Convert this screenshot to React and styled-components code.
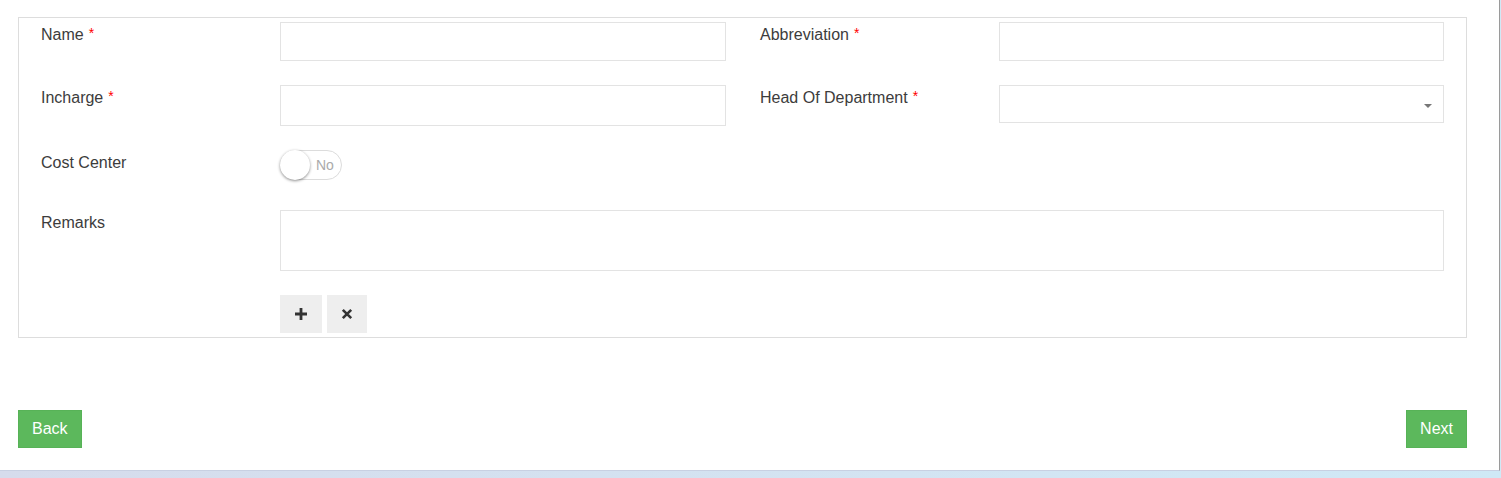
import React from 'react'
import styled, { createGlobalStyle } from 'styled-components'

const GlobalStyle = createGlobalStyle`
  html, body {
    margin: 0;
    padding: 0;
    height: 478px;
    overflow: hidden;
    background: linear-gradient(to right, #d6dcec 0%, #d3e4f2 60%, #cfe9f6 100%);
    font-family: "Liberation Sans", Arial, sans-serif;
  }
`

const Panel = styled.div`
  width: 1500px;
  height: 471px;
  background: #fff;
  border-right: 1px solid #9a9a9a;
  border-bottom: 1px solid #c8d0e2;
  padding-top: 17px;
  box-sizing: border-box;
`

const Fieldset = styled.div`
  width: 1449px;
  margin-left: 18px;
  border: 1px solid #ddd;
  padding: 4px 22px 4px 22px;
  box-sizing: border-box;
`

const Row = styled.div`
  display: grid;
  grid-template-columns: 239px 446px 34px 239px 445px;
  margin-top: ${p => p.$gap || 0}px;
  align-items: start;
`

const Label = styled.div`
  grid-column: ${p => (p.$right ? 4 : 1)};
  padding-top: 4px;
  font-size: 16px;
  line-height: 18px;
  color: #3c3c3c;
`

const Req = styled.span`
  color: #f00;
  font-size: 14px;
  margin-left: 5px;
  vertical-align: top;
  line-height: 14px;
`

const Input = styled.div`
  grid-column: ${p => (p.$right ? 5 : 2)};
  height: ${p => p.$h || 39}px;
  border: 1px solid #e3e3e3;
  box-sizing: border-box;
  background: #fff;
`

const Select = styled(Input)`
  display: flex;
  align-items: center;
  justify-content: flex-end;
  padding-right: 11px;
`

const Caret = styled.span`
  width: 0;
  height: 0;
  border-left: 4px solid transparent;
  border-right: 4px solid transparent;
  border-top: 4px solid #777;
  margin-top: 3px;
`

const TextArea = styled.div`
  grid-column: 2 / 6;
  height: 61px;
  border: 1px solid #e3e3e3;
  box-sizing: border-box;
`

const Switch = styled.div`
  grid-column: 2;
  position: relative;
  width: 62px;
  height: 30px;
  border: 1px solid #dcdcdc;
  border-radius: 15px;
  box-sizing: border-box;
  display: flex;
  align-items: center;
  padding-left: 35px;
  font-size: 14px;
  color: #aaa;
`

const Knob = styled.span`
  position: absolute;
  left: -1px;
  top: -1px;
  width: 30px;
  height: 30px;
  border-radius: 50%;
  background: #fff;
  box-shadow: 0 1px 3px rgba(0, 0, 0, 0.45);
`

const Tools = styled.div`
  grid-column: 2;
  display: flex;
  gap: 5px;
`

const ToolButton = styled.button`
  width: ${p => p.$w}px;
  height: 38px;
  border: none;
  background: #eee;
  display: flex;
  align-items: center;
  justify-content: center;
  padding: 0;
`

const Footer = styled.div`
  width: 1449px;
  margin: 72px 0 0 18px;
  display: flex;
  justify-content: space-between;
`

const GreenButton = styled.button`
  height: 38px;
  padding: 0 ${p => p.$px}px;
  background: #5cb85c;
  border: 1px solid #57b257;
  color: #fff;
  font-family: "Liberation Sans", Arial, sans-serif;
  font-size: 16px;
  border-radius: 0;
`

const PlusIcon = () => (
  <svg width="14" height="14" viewBox="0 0 14 14">
    <path d="M7 1v12M1 7h12" stroke="#333" strokeWidth="2.8" />
  </svg>
)

const CrossIcon = () => (
  <svg width="12" height="12" viewBox="0 0 12 12">
    <path d="M1.8 1.8l8.4 8.4M10.2 1.8l-8.4 8.4" stroke="#333" strokeWidth="2.6" />
  </svg>
)

export default function App() {
  return (
    <>
      <GlobalStyle />
      <Panel>
        <Fieldset>
          <Row>
            <Label>Name<Req>*</Req></Label>
            <Input />
            <Label $right>Abbreviation<Req>*</Req></Label>
            <Input $right />
          </Row>
          <Row $gap={24}>
            <Label>Incharge<Req>*</Req></Label>
            <Input $h={41} />
            <Label $right>Head Of Department<Req>*</Req></Label>
            <Select $right $h={38}><Caret /></Select>
          </Row>
          <Row $gap={24}>
            <Label>Cost Center</Label>
            <Switch><Knob />No</Switch>
          </Row>
          <Row $gap={30}>
            <Label>Remarks</Label>
            <TextArea />
          </Row>
          <Row $gap={24}>
            <Tools>
              <ToolButton $w={42}><PlusIcon /></ToolButton>
              <ToolButton $w={40}><CrossIcon /></ToolButton>
            </Tools>
          </Row>
        </Fieldset>
        <Footer>
          <GreenButton $px={13}>Back</GreenButton>
          <GreenButton $px={13}>Next</GreenButton>
        </Footer>
      </Panel>
    </>
  )
}
